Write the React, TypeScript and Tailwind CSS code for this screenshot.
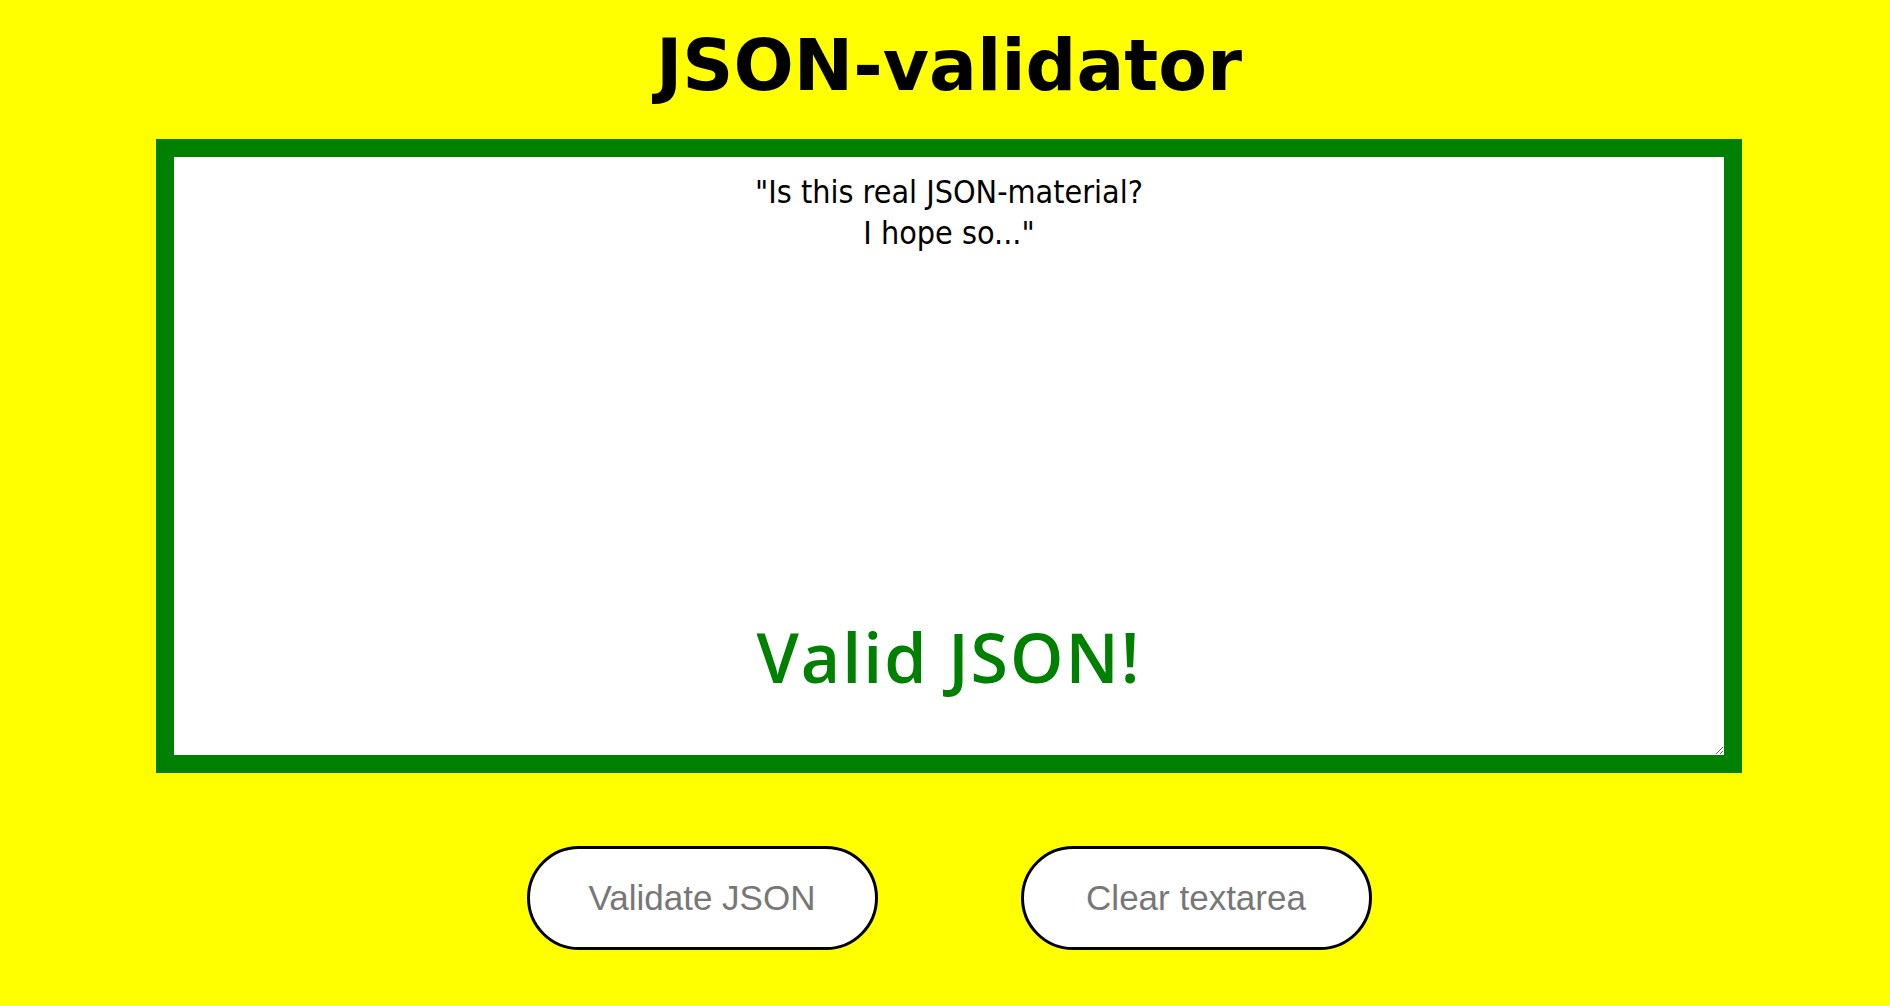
import { useState } from "react";

const initialText = `"Is this real JSON-material?
I hope so..."`;

export default function App() {
  const [text, setText] = useState(initialText);
  const [result, setResult] = useState<string | null>("Valid JSON!");

  const validate = () => {
    try {
      JSON.parse(text);
      setResult("Valid JSON!");
    } catch {
      setResult("Invalid JSON!");
    }
  };

  return (
    <div className="min-h-[1006px] w-full bg-[#ffff00] pl-[8px]">
      <div className="flex flex-col items-center">
        <h1 className="mt-[24px] text-[71px] leading-[83px] font-bold text-black [font-family:'DejaVu_Sans',Verdana,sans-serif]">
          JSON-validator
        </h1>

        <div className="relative mt-[32px]">
          <textarea
            value={text}
            onChange={(e) => setText(e.target.value)}
            className="block h-[634px] w-[1586px] border-[18px] border-[#008000] bg-white px-4 pt-[15px] text-center text-[32px] leading-[41px] text-black outline-none [font-family:'DejaVu_Sans_Condensed','DejaVu_Sans',sans-serif] [font-stretch:condensed]"
          />
          {result && (
            <p className="pointer-events-none absolute inset-x-0 top-[472px] text-center text-[68px] leading-[92px] font-semibold tracking-[2px] text-[#008000] [font-family:'Open_Sans',sans-serif]">
              {result}
            </p>
          )}
        </div>

        <div className="mt-[73px] flex gap-[143px]">
          <button
            onClick={validate}
            className="h-[104px] w-[351px] rounded-full border-[3px] border-black bg-white text-[35px] text-[#777777] [font-family:'Liberation_Sans',Arial,sans-serif]"
          >
            Validate JSON
          </button>
          <button
            onClick={() => {
              setText("");
              setResult(null);
            }}
            className="h-[104px] w-[351px] rounded-full border-[3px] border-black bg-white text-[35px] text-[#777777] [font-family:'Liberation_Sans',Arial,sans-serif]"
          >
            Clear textarea
          </button>
        </div>
      </div>
    </div>
  );
}
